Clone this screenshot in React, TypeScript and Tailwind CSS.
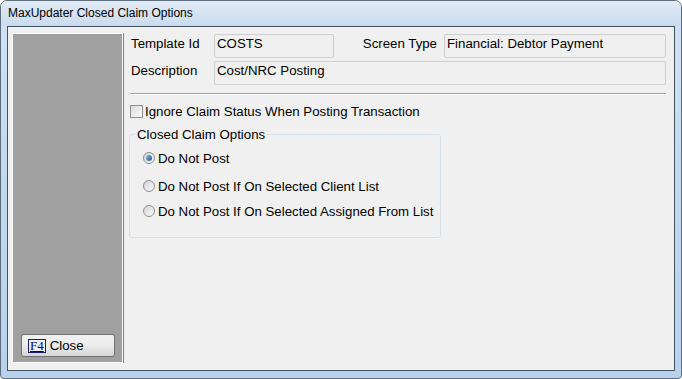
import React from "react"

const ui = "font-['Liberation_Sans',Arial,sans-serif] text-[13.25px] leading-[15px] text-black"

function TextBox({ value, className }: { value: string; className?: string }) {
  return (
    <div className={`h-[24px] border border-[#cfcfcf] rounded-[2px] bg-[#f0f0f0] pl-[2px] pt-[1px] whitespace-nowrap ${className ?? ""}`}>
      {value}
    </div>
  )
}

function Radio({ label, checked }: { label: string; checked?: boolean }) {
  return (
    <div className="flex items-center gap-[3px] h-[16px]">
      <span className="w-[12px] h-[12px] rounded-full border border-[#8e8f8f] bg-gradient-to-br from-[#d4d4d4] to-[#fbfbfb] flex items-center justify-center">
        {checked && <span className="w-[6px] h-[6px] rounded-full bg-gradient-to-br from-[#8cc0ee] to-[#1b4f8c]" />}
      </span>
      <span>{label}</span>
    </div>
  )
}

export default function App() {
  return (
    <div className={`w-[682px] h-[379px] flex flex-col border border-[#5d6d7e] rounded-t-[7px] rounded-b-[4px] overflow-hidden bg-gradient-to-b from-[#d3e2f3] via-[#c2d8ef] to-[#b9d1eb] ${ui}`}>
      <div className="h-[25px] pl-[7px] flex items-center text-[12px] bg-gradient-to-b from-[#e3ecf7] to-[#c9dbef]">
        MaxUpdater Closed Claim Options
      </div>

      <div className="flex-1 mx-[6px] mb-[7px] border border-[#44515f] bg-[#f0f0f0] flex pt-[6px] pl-[4px] pb-[7px]">
        <div className="w-[111px] border border-white bg-[#a0a0a0] shadow-[1px_0_0_#7d7d7d] flex flex-col justify-end pl-[8px] pb-[5px]">
          <button className="w-[94px] h-[23px] border border-[#707070] rounded-[3px] bg-gradient-to-b from-[#f2f2f2] via-[#ebebeb] to-[#d6d6d6] flex items-center pl-[6px] gap-[4px]">
            <span className="h-[14px] px-[1px] border border-[#1a1a6e] bg-[#eef2fa] text-[#000080] font-['Liberation_Serif',serif] text-[13px] leading-[12px] underline">
              F4
            </span>
            <span>Close</span>
          </button>
        </div>

        <div className="flex-1 flex flex-col pt-[1px] pl-[8px] pr-[8px]">
          <div className="flex items-start h-[24px]">
            <span className="w-[83px] pt-[2px]">Template Id</span>
            <TextBox value="COSTS" className="w-[120px]" />
            <span className="flex-1" />
            <span className="pt-[2px] mr-[7px]">Screen Type</span>
            <TextBox value="Financial: Debtor Payment" className="w-[222px]" />
          </div>

          <div className="flex items-start h-[24px] mt-[3px]">
            <span className="w-[83px] pt-[2px]">Description</span>
            <TextBox value="Cost/NRC Posting" className="flex-1" />
          </div>

          <div className="mt-[8px] -ml-px border-t border-[#a0a0a0] border-b border-b-white" />

          <div className="mt-[9px] -ml-px flex items-center gap-[2px] h-[14px]">
            <span className="w-[13px] h-[13px] border border-[#8e8f8f] bg-gradient-to-br from-[#dcdcdc] to-[#fcfcfc]" />
            <span>Ignore Claim Status When Posting Transaction</span>
          </div>

          <fieldset className="mt-[9px] -ml-[2px] w-[312px] h-[111px] border border-[#d5dfe5] rounded-[3px]">
            <legend className="ml-[5px] px-[2px] leading-[15px]">Closed Claim Options</legend>
            <div className="pl-[13px] mt-[8px]">
              <Radio label="Do Not Post" checked />
            </div>
            <div className="pl-[13px] mt-[12px]">
              <Radio label="Do Not Post If On Selected Client List" />
            </div>
            <div className="pl-[13px] mt-[9px]">
              <Radio label="Do Not Post If On Selected Assigned From List" />
            </div>
          </fieldset>
        </div>
      </div>
    </div>
  )
}
